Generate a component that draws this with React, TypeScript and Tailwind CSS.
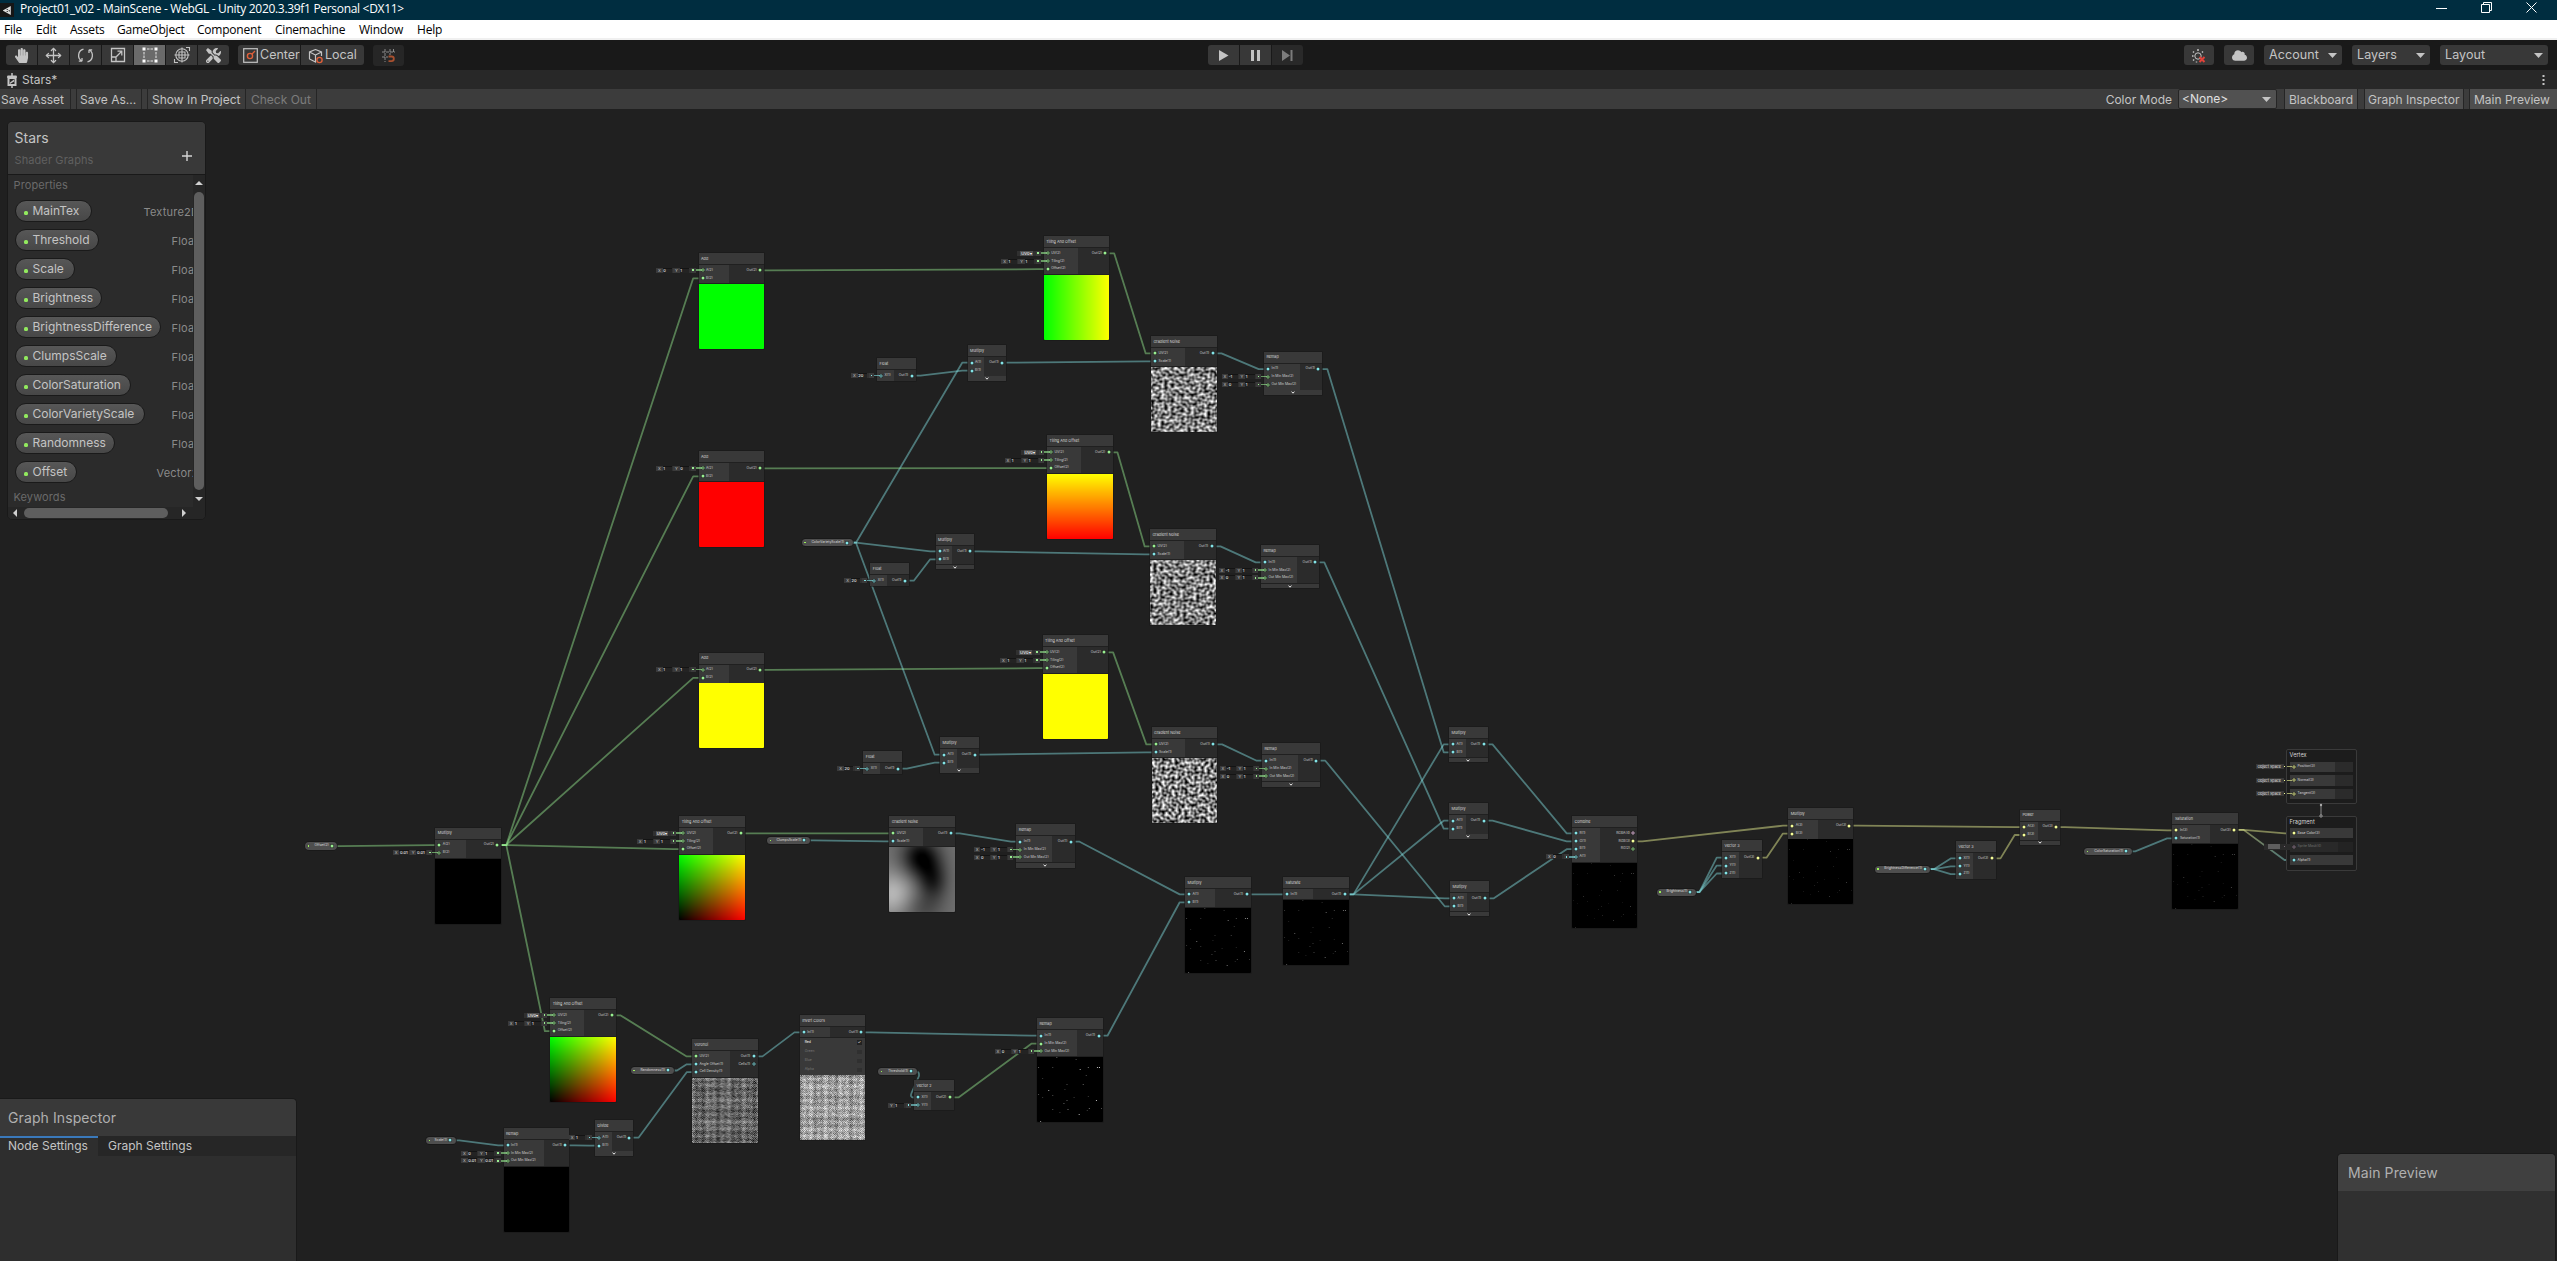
import React from "react";
import { Move } from "lucide-react";
import { FaHandPaper, FaTools, FaCloud } from "react-icons/fa";

const COL: Record<number, string> = { 1: "#84e4e7", 2: "#9aef92", 3: "#f6ff9a", 4: "#fbcbf4" };

type Widget = { row: number; kind: "uv" | "v"; vals?: [string, string][]; c: number };
type Preview = "green" | "red" | "yellow" | "black" | "gy" | "yr" | "uv" | "noise0" | "noise1" | "noise2" | "clumps" | "voronoi" | "invert" | "stars1" | "stars2" | "stars3" | "stars4" | "stars5" | "stars6";
type NodeT = {
  id: string; t: string; x: number; y: number; w: number; lc: number;
  ins: [string, number][]; outs: [string, number, boolean?][];
  wid?: Widget[]; pv?: Preview; foot?: boolean; toggles?: boolean;
};
type PillT = { id: string; t: string; x: number; y: number; w: number; c: number };

const xy = (row: number, a: string, b: string): Widget => ({ row, kind: "v", vals: [["X", a], ["Y", b]], c: 2 });
const uv0: Widget = { row: 0, kind: "uv", c: 2 };

const add = (id: string, x: number, y: number, a: string, b: string, pv: Preview): NodeT => ({
  id, t: "Add", x, y, w: 65.5, lc: 30, ins: [["A(2)", 2], ["B(2)", 2]], outs: [["Out(2)", 2]], wid: [xy(0, a, b)], pv,
});
const tiling = (id: string, x: number, y: number, pv: Preview): NodeT => ({
  id, t: "Tiling And Offset", x, y, w: 65.5, lc: 34, ins: [["UV(2)", 2], ["Tiling(2)", 2], ["Offset(2)", 2]], outs: [["Out(2)", 2]], wid: [uv0, xy(1, "1", "1")], pv,
});
const gradient = (id: string, x: number, y: number, pv: Preview): NodeT => ({
  id, t: "Gradient Noise", x, y, w: 65.5, lc: 33.5, ins: [["UV(2)", 2], ["Scale(1)", 1]], outs: [["Out(1)", 1]], pv,
});
const multiply = (id: string, x: number, y: number): NodeT => ({
  id, t: "Multiply", x, y, w: 38.5, lc: 16.8, ins: [["A(1)", 1], ["B(1)", 1]], outs: [["Out(1)", 1]], foot: true,
});
const float = (id: string, x: number, y: number): NodeT => ({
  id, t: "Float", x, y, w: 38.5, lc: 17, ins: [["X(1)", 1]], outs: [["Out(1)", 1]], wid: [{ row: 0, kind: "v", vals: [["X", "20"]], c: 1 }],
});
const remap = (id: string, x: number, y: number): NodeT => ({
  id, t: "Remap", x, y, w: 58.3, lc: 36, ins: [["In(1)", 1], ["In Min Max(2)", 2], ["Out Min Max(2)", 2]], outs: [["Out(1)", 1]], wid: [xy(1, "-1", "1"), xy(2, "0", "1")], foot: true,
});

const NODES: NodeT[] = [
  add("addG", 698.5, 253, "0", "1", "green"),
  add("addR", 698.5, 451, "1", "0", "red"),
  add("addY", 698.5, 652.5, "1", "1", "yellow"),
  tiling("tilG", 1043.7, 236, "gy"),
  tiling("tilR", 1047, 435, "yr"),
  tiling("tilY", 1042.6, 635, "yellow"),
  tiling("tilB", 679.2, 816, "uv"),
  tiling("tilC", 550.2, 998, "uv"),
  gradient("gr1", 1151, 336, "noise0"),
  gradient("gr2", 1150, 529, "noise1"),
  gradient("gr3", 1151.6, 727, "noise2"),
  gradient("grC", 889.2, 816, "clumps"),
  multiply("m1", 967.5, 345.3),
  multiply("m2", 935.5, 534),
  multiply("m3", 940, 737.3),
  float("f1", 877, 358.3),
  float("f2", 870.3, 563.3),
  float("f3", 863.3, 751.3),
  remap("r1", 1264, 351.7),
  remap("r2", 1261, 545),
  remap("r3", 1262, 743.3),
  remap("rC", 1016.3, 824.3),
  multiply("ma", 1449, 727),
  multiply("mb", 1449, 803.3),
  multiply("mc", 1450, 881),
  { id: "mOff", t: "Multiply", x: 435.3, y: 827.7, w: 66, lc: 30.5, ins: [["A(2)", 2], ["B(2)", 2]], outs: [["Out(2)", 2]], wid: [xy(1, "0.01", "0.01")], pv: "black" },
  { id: "mL", t: "Multiply", x: 1185, y: 877, w: 65.5, lc: 30, ins: [["A(1)", 1], ["B(1)", 1]], outs: [["Out(1)", 1]], pv: "stars2" },
  { id: "sat", t: "Saturate", x: 1283, y: 877, w: 65.5, lc: 30, ins: [["In(1)", 1]], outs: [["Out(1)", 1]], pv: "stars3" },
  { id: "rS", t: "Remap", x: 503.5, y: 1128, w: 65.7, lc: 40, ins: [["In(1)", 1], ["In Min Max(2)", 2], ["Out Min Max(2)", 2]], outs: [["Out(1)", 1]], wid: [xy(1, "0", "1"), xy(2, "0.01", "0.01")], pv: "black" },
  { id: "div", t: "Divide", x: 594.8, y: 1120.3, w: 38.7, lc: 16.8, ins: [["A(1)", 1], ["B(1)", 1]], outs: [["Out(1)", 1]], wid: [{ row: 0, kind: "v", vals: [["X", "1"]], c: 1 }], foot: true },
  { id: "vor", t: "Voronoi", x: 692, y: 1039, w: 65.5, lc: 38, ins: [["UV(2)", 2], ["Angle Offset(1)", 1], ["Cell Density(1)", 1]], outs: [["Out(1)", 1], ["Cells(1)", 1, true]], pv: "voronoi" },
  { id: "inv", t: "Invert Colors", x: 799.7, y: 1015, w: 65.7, lc: 30, ins: [["In(1)", 1]], outs: [["Out(1)", 1]], toggles: true, pv: "invert" },
  { id: "v2", t: "Vector 2", x: 914, y: 1080, w: 39.5, lc: 17, ins: [["X(1)", 1], ["Y(1)", 1]], outs: [["Out(2)", 2]], wid: [{ row: 1, kind: "v", vals: [["Y", "1"]], c: 1 }] },
  { id: "rD", t: "Remap", x: 1037, y: 1018.3, w: 65.5, lc: 40, ins: [["In(1)", 1], ["In Min Max(2)", 2], ["Out Min Max(2)", 2]], outs: [["Out(1)", 1]], wid: [xy(2, "0", "1")], pv: "stars1" },
  { id: "comb", t: "Combine", x: 1572, y: 816, w: 65.3, lc: 28, ins: [["R(1)", 1], ["G(1)", 1], ["B(1)", 1], ["A(1)", 1]], outs: [["RGBA(4)", 4, true], ["RGB(3)", 3], ["RG(2)", 2, true]], wid: [{ row: 3, kind: "v", vals: [["X", "0"]], c: 1 }], pv: "stars4" },
  { id: "mBr", t: "Multiply", x: 1788.2, y: 808.3, w: 65.3, lc: 30, ins: [["A(3)", 3], ["B(3)", 3]], outs: [["Out(3)", 3]], pv: "stars5" },
  { id: "v3a", t: "Vector 3", x: 1722, y: 840.3, w: 39.5, lc: 17.3, ins: [["X(1)", 1], ["Y(1)", 1], ["Z(1)", 1]], outs: [["Out(3)", 3]] },
  { id: "pow", t: "Power", x: 2020, y: 809.7, w: 40, lc: 17.5, ins: [["A(3)", 3], ["B(3)", 3]], outs: [["Out(3)", 3]], foot: true },
  { id: "v3b", t: "Vector 3", x: 1956, y: 841, w: 39.5, lc: 16.5, ins: [["X(1)", 1], ["Y(1)", 1], ["Z(1)", 1]], outs: [["Out(3)", 3]] },
  { id: "satn", t: "Saturation", x: 2172.4, y: 813, w: 65.5, lc: 38, ins: [["In(3)", 3], ["Saturation(1)", 1]], outs: [["Out(3)", 3]], pv: "stars6" },
];

const PILLS: PillT[] = [
  { id: "pVar", t: "ColorVarietyScale(1)", x: 801.5, y: 542.7, w: 51, c: 1 },
  { id: "pCl", t: "ClumpsScale(1)", x: 767.4, y: 840.4, w: 42.5, c: 1 },
  { id: "pOff", t: "Offset(2)", x: 305, y: 846.1, w: 32.3, c: 2 },
  { id: "pSc", t: "Scale(1)", x: 426, y: 1140.4, w: 29.7, c: 1 },
  { id: "pRnd", t: "Randomness(1)", x: 630.5, y: 1070.5, w: 43, c: 1 },
  { id: "pTh", t: "Threshold(1)", x: 878, y: 1071.4, w: 38.5, c: 1 },
  { id: "pBr", t: "Brightness(1)", x: 1656.6, y: 892.2, w: 39.3, c: 1 },
  { id: "pBd", t: "BrightnessDifference(1)", x: 1874.6, y: 869.2, w: 55.8, c: 1 },
  { id: "pCs", t: "ColorSaturation(1)", x: 2084.2, y: 851.4, w: 47.5, c: 1 },
];

const LINKS: [string, number, string, number][] = [
  ["pOff", 0, "mOff", 0], ["mOff", 0, "addG", 1], ["mOff", 0, "addR", 1], ["mOff", 0, "addY", 1], ["mOff", 0, "tilB", 2], ["mOff", 0, "tilC", 2],
  ["addG", 0, "tilG", 2], ["addR", 0, "tilR", 2], ["addY", 0, "tilY", 2],
  ["tilG", 0, "gr1", 0], ["tilR", 0, "gr2", 0], ["tilY", 0, "gr3", 0], ["tilB", 0, "grC", 0], ["pCl", 0, "grC", 1],
  ["pVar", 0, "m1", 0], ["pVar", 0, "m2", 0], ["pVar", 0, "m3", 0],
  ["f1", 0, "m1", 1], ["f2", 0, "m2", 1], ["f3", 0, "m3", 1],
  ["m1", 0, "gr1", 1], ["m2", 0, "gr2", 1], ["m3", 0, "gr3", 1],
  ["gr1", 0, "r1", 0], ["gr2", 0, "r2", 0], ["gr3", 0, "r3", 0], ["grC", 0, "rC", 0],
  ["r1", 0, "ma", 1], ["r2", 0, "mb", 1], ["r3", 0, "mc", 1], ["rC", 0, "mL", 0],
  ["tilC", 0, "vor", 0], ["pRnd", 0, "vor", 1], ["pSc", 0, "rS", 0], ["rS", 0, "div", 1], ["div", 0, "vor", 2], ["vor", 0, "inv", 0], ["inv", 0, "rD", 0],
  ["v2", 0, "rD", 1], ["rD", 0, "mL", 1], ["mL", 0, "sat", 0],
  ["sat", 0, "ma", 0], ["sat", 0, "mb", 0], ["sat", 0, "mc", 0],
  ["ma", 0, "comb", 0], ["mb", 0, "comb", 1], ["mc", 0, "comb", 2], ["comb", 1, "mBr", 0],
  ["pBr", 0, "v3a", 0], ["pBr", 0, "v3a", 1], ["pBr", 0, "v3a", 2], ["v3a", 0, "mBr", 1], ["mBr", 0, "pow", 0],
  ["pBd", 0, "v3b", 0], ["pBd", 0, "v3b", 1], ["pBd", 0, "v3b", 2], ["v3b", 0, "pow", 1], ["pow", 0, "satn", 0], ["pCs", 0, "satn", 1],
];

const portY = (i: number) => 17.4 + 7.9 * i;

function Wires() {
  const lines = LINKS.map(([a, i, b, j], k) => {
    const p = PILLS.find((n) => n.id === a);
    const s = NODES.find((n) => n.id === a);
    const d = NODES.find((n) => n.id === b)!;
    const x1 = p ? p.x + p.w - 5.5 : s!.x + s!.w - 4;
    const y1 = p ? p.y : s!.y + portY(i);
    const c = p ? p.c : s!.outs[i][1];
    const x2 = d.x + 4;
    const y2 = d.y + portY(j);
    return <path key={k} d={`M${x1} ${y1}H${x1 + 9}L${x2 - 9.3} ${y2}H${x2}`} stroke={COL[c]} strokeOpacity=".45" strokeWidth="1.8" />;
  });
  return (
    <svg className="absolute left-0 top-0" width="2557" height="1261" fill="none" strokeLinejoin="round">
      <defs>
        <linearGradient id="yt" x1="2243" y1="830" x2="2290" y2="860" gradientUnits="userSpaceOnUse">
          <stop offset="0" stopColor={COL[3]} />
          <stop offset="1" stopColor={COL[1]} />
        </linearGradient>
      </defs>
      {lines}
      <path d="M916 1071.4Q919.5 1071.4 919 1076L911.5 1093Q909.5 1097.5 914 1097.5" stroke={COL[1]} strokeOpacity=".45" strokeWidth="1.8" />
      <path d="M2234.6 829.9H2243.6L2285 833.4H2293" stroke={COL[3]} strokeOpacity=".45" strokeWidth="1.8" />
      <path d="M2234.6 829.9H2243.6L2284.5 860H2293" stroke="url(#yt)" strokeOpacity=".45" strokeWidth="1.8" />
    </svg>
  );
}

/* ---- preview textures ---- */
const S = 65;
const mod = (a: number, n: number) => ((a % n) + n) % n;
const fr = (a: number) => a - Math.floor(a);
function dir(px: number, py: number): [number, number] {
  px = mod(px, 289); py = mod(py, 289);
  let x = mod((34 * px + 1) * px, 289) + py;
  x = mod((34 * x + 1) * x, 289);
  x = fr(x / 41) * 2 - 1;
  const vx = x - Math.floor(x + 0.5), vy = Math.abs(x) - 0.5;
  const l = Math.hypot(vx, vy) || 1;
  return [vx / l, vy / l];
}
function gnoise(u: number, v: number, s: number) {
  const px = u * s, py = v * s, ix = Math.floor(px), iy = Math.floor(py), fx = px - ix, fy = py - iy;
  const dt = (ox: number, oy: number) => { const g = dir(ix + ox, iy + oy); return g[0] * (fx - ox) + g[1] * (fy - oy); };
  const q = (t: number) => t * t * t * (t * (t * 6 - 15) + 10);
  const a = dt(0, 0), b = dt(0, 1), c = dt(1, 0), d = dt(1, 1), wy = q(fy), wx = q(fx);
  const l = a + (b - a) * wy, r = c + (d - c) * wy;
  return l + (r - l) * wx + 0.5;
}
/* dense cells aliased into a woven pattern with nine bands per side */
function weave(x: number, y: number) {
  const h = fr(Math.sin(x * 12.9898 + y * 78.233) * 43758.5453);
  const bx = Math.cos((x * 2 * Math.PI) / 7.2) * 0.07 + Math.cos((x * 2 * Math.PI) / 17) * 0.04;
  const by = Math.cos((y * 2 * Math.PI) / 7.2) * 0.07 + Math.cos((y * 2 * Math.PI) / 23) * 0.03;
  return 0.4 + bx + by + ((x + y) % 2 ? 0.07 : -0.07) + (h - 0.5) * 0.26;
}
const blob = (x: number, y: number, cx: number, cy: number, rx: number, ry: number) => Math.exp(-(((x - cx) / rx) ** 2 + ((y - cy) / ry) ** 2));
const clump = (x: number, y: number) =>
  0.44 - 0.42 * blob(x, y, 0.48, 0.16, 0.28, 0.3) - 0.3 * blob(x, y, 0.66, 0.52, 0.22, 0.3) - 0.14 * blob(x, y, 0.5, 0.95, 0.3, 0.25) + 0.28 * blob(x, y, 0.06, 0.72, 0.32, 0.34);

const STARS = [[19, 0, 0.5], [38, 2, 0.4], [1, 10, 0.5], [15, 10, 0.4], [42, 12, 0.9], [50, 10, 0.6], [59, 10, 1], [61, 10, 1], [48, 18, 0.4], [5, 21, 0.3], [29, 27, 0.4], [45, 27, 0.5], [11, 33, 0.8], [1, 37, 0.4], [15, 38, 0.4], [50, 39, 0.3], [58, 43, 1], [29, 43, 0.5], [26, 46, 0.5], [30, 52, 0.6], [51, 51, 0.6], [15, 52, 0.4], [41, 57, 0.9], [63, 51, 0.4], [3, 64, 0.7], [5, 40, 0.3], [49, 53, 0.3], [27, 32, 0.3], [36, 40, 0.3], [22, 55, 0.3]];
const DIM: Record<string, number> = { stars1: 0.75, stars2: 0.5, stars3: 0.42, stars4: 0.22, stars5: 0.22, stars6: 0.25 };

function pixel(kind: Preview, x: number, y: number): [number, number, number] {
  const u = (x + 0.5) / S, v = 1 - (y + 0.5) / S;
  let g = 0;
  switch (kind) {
    case "gy": return [u * 255, 255, 0];
    case "yr": return [255, v * 255, 0];
    case "uv": return [u * 255, v * 255, 0];
    case "noise0": g = gnoise(u, v + 1, 20); break;
    case "noise1": g = gnoise(u + 1, v, 20); break;
    case "noise2": g = gnoise(u + 1, v + 1, 20); break;
    case "clumps": g = clump(u, 1 - v); break;
    case "voronoi": g = weave(x, y); break;
    case "invert": g = 1.02 - weave(x, y); break;
  }
  g = Math.max(0, Math.min(1, g)) * 255;
  return [g, g, g];
}

function Texture({ kind }: { kind: Preview }) {
  const paint = (c: HTMLCanvasElement | null) => {
    const g = c?.getContext("2d");
    if (!g) return;
    if (kind.startsWith("stars")) {
      g.fillStyle = "#000";
      g.fillRect(0, 0, S, S);
      STARS.forEach(([x, y, b]) => {
        const k = Math.round(b * DIM[kind] * 255);
        g.fillStyle = `rgb(${k},${k},${k})`;
        g.fillRect(x, y, 1, 1);
      });
      return;
    }
    const im = g.createImageData(S, S);
    for (let y = 0; y < S; y++) for (let x = 0; x < S; x++) {
      const [r, gg, b] = pixel(kind, x, y);
      const o = (y * S + x) * 4;
      im.data[o] = r; im.data[o + 1] = gg; im.data[o + 2] = b; im.data[o + 3] = 255;
    }
    g.putImageData(im, 0, 0);
  };
  return <canvas ref={paint} width={S} height={S} className="block h-[65px] w-full" />;
}

function PreviewBox({ kind }: { kind: Preview }) {
  if (kind === "green") return <div className="h-[65px] rounded-b-[1px] bg-[#00ff00]" />;
  if (kind === "red") return <div className="h-[65px] rounded-b-[1px] bg-[#ff0000]" />;
  if (kind === "yellow") return <div className="h-[65px] rounded-b-[1px] bg-[#ffff00]" />;
  if (kind === "black") return <div className="h-[65px] rounded-b-[1px] bg-black" />;
  return <div className="overflow-hidden rounded-b-[1px]"><Texture kind={kind} /></div>;
}

function Dot({ c, open }: { c: number; open?: boolean }) {
  return (
    <svg className="shrink-0" width="4" height="4" viewBox="0 0 4 4">
      <circle cx="2" cy="2" r="2" fill="#1c1c1c" />
      {open ? <circle cx="2" cy="2" r="1.2" fill="none" stroke={COL[c]} strokeWidth=".8" /> : <circle cx="2" cy="2" r="1.5" fill={COL[c]} />}
    </svg>
  );
}

function WidgetBox({ w }: { w: Widget }) {
  const width = w.kind === "uv" ? 26.5 : w.vals!.length === 2 ? 42.5 : 26;
  return (
    <div className="absolute flex h-[5px] items-center" style={{ left: -width, top: portY(w.row) - 2.8, width: width + 3 }}>
      <div className="flex h-[5px] flex-1 items-center gap-[1px] bg-[#303030]">
        {w.kind === "uv" ? (
          <span className="ml-[3px] h-[5px] bg-[#505050] px-[1px] text-[4.1px] leading-[5px] whitespace-nowrap text-white">UV0▾</span>
        ) : (
          w.vals!.map(([k, v]) => (
            <span key={k} className="flex h-[5px] items-center text-[4.1px] leading-[5px] text-[#c8c8c8]">
              <span className="h-[5px] w-[6.5px] bg-[#3a3a3a] pl-[2px]">{k}</span>
              <span className="h-[5px] w-[9.5px] bg-[#232323] pl-[.8px] tracking-[-0.1px] whitespace-nowrap text-white shadow-[inset_0_.7px_0_#101010]">{v}</span>
            </span>
          ))
        )}
      </div>
      <div className="flex h-[5px] w-[5px] items-center justify-center bg-[#3a3a3a]">
        <div className="h-[1.5px] w-[1.5px]" style={{ background: COL[w.c] }} />
      </div>
      <div className="h-[1.6px] w-[6px] opacity-60" style={{ background: COL[w.c] }} />
    </div>
  );
}

function GraphNode({ n }: { n: NodeT }) {
  const rows = Math.max(n.ins.length, n.outs.length);
  return (
    <div className="absolute shadow-[0_0_0_.6px_#191919]" style={{ left: n.x, top: n.y, width: n.w }}>
      <div className="flex h-[11px] items-center bg-[#393939] pl-[2.5px] text-[3.75px] leading-none text-[#dadada]">{n.t}</div>
      <div className="mt-[1.2px] flex" style={{ height: 2.3 + 7.9 * rows }}>
        <div className="bg-[#393939] pt-[1.2px] pl-[2px]" style={{ width: n.lc }}>
          {n.ins.map(([l, c], i) => (
            <div key={i} className="flex h-[7.9px] items-center gap-[1.5px] text-[3.4px] leading-none whitespace-nowrap text-[#d0d0d0]">
              <Dot c={c} open={!!n.wid?.some((w) => w.row === i)} />
              {l}
            </div>
          ))}
        </div>
        <div className="flex-1 bg-[#2b2b2b] pt-[1.2px] pr-[2px]">
          {n.outs.map(([l, c, open], i) => (
            <div key={i} className="flex h-[7.9px] items-center justify-end gap-[1.2px] text-[3.4px] leading-none whitespace-nowrap text-[#d0d0d0]">
              {l}
              <Dot c={c} open={open} />
            </div>
          ))}
        </div>
      </div>
      {n.toggles && (
        <div className="mt-[.8px] flex h-[36.5px] flex-col justify-around bg-[#393939] pr-[3.5px] pl-[5px] text-[3.4px] leading-none">
          {["Red", "Green", "Blue", "Alpha"].map((l, i) => (
            <div key={l} className={i ? "flex items-center justify-between text-[#787878]" : "flex items-center justify-between text-white"}>
              {l}
              <span className={i ? "h-[4.5px] w-[4.5px] bg-[#303030] text-[4px]" : "h-[4.5px] w-[4.5px] bg-[#222] text-[4px] text-white"}>{i ? "" : "✓"}</span>
            </div>
          ))}
        </div>
      )}
      {n.pv && <div className="mt-[.7px]"><PreviewBox kind={n.pv} /></div>}
      {n.foot && (
        <div className="mt-[.6px] flex h-[4.5px] items-center justify-center bg-[#393939]">
          <svg width="4" height="3" viewBox="0 0 4 3"><path d="M.6.6L2 2.2L3.4.6" fill="none" stroke="#fff" strokeWidth=".9" /></svg>
        </div>
      )}
      {n.wid?.map((w, i) => <WidgetBox key={i} w={w} />)}
    </div>
  );
}

function GraphPill({ p }: { p: PillT }) {
  return (
    <div className="absolute flex h-[7.4px] items-center justify-between rounded-full bg-[#4e4e4e] pr-[3.5px] pl-[2.5px] text-[3.4px] leading-none whitespace-nowrap text-[#dedede] shadow-[0_0_0_.7px_#171717]" style={{ left: p.x, top: p.y - 3.7, width: p.w }}>
      <span className="h-[1.5px] w-[1.5px] bg-[#9aef5a]" />
      <span className="flex items-center gap-[1px]">{p.t}<Dot c={p.c} /></span>
    </div>
  );
}

function BlockRow({ t, c, wide, dim }: { t: string; c: number; wide?: boolean; dim?: boolean }) {
  return (
    <div className={dim ? "flex h-[10.3px] bg-[#232323] text-[#707070]" : "flex h-[10.3px] bg-[#2b2b2b] text-[#dadada]"}>
      <div className={wide ? "flex w-full items-center gap-[2px] bg-[#393939] pl-[2px] text-[3.4px]" : dim ? "flex w-[48px] items-center gap-[2px] bg-[#292929] pl-[2px] text-[3.4px]" : "flex w-[45.5px] items-center gap-[2px] bg-[#393939] pl-[2px] text-[3.4px]"}>
        <span className={dim ? "flex opacity-50" : "flex"}><Dot c={c} open={!wide} /></span>
        {t}
      </div>
    </div>
  );
}

function Stacks() {
  return (
    <>
      <div className="absolute top-[749.3px] left-[2285.6px] h-[55px] w-[71.5px] rounded-[2px] border border-[#3a3a3a] bg-[#1c1c1c] px-[3px]">
        <div className="flex h-[11.5px] items-center text-[5.6px] leading-none text-[#d4d4d4]">Vertex</div>
        <div className="flex flex-col gap-[3.2px]">
          <BlockRow t="Position(3)" c={3} />
          <BlockRow t="Normal(3)" c={3} />
          <BlockRow t="Tangent(3)" c={3} />
        </div>
      </div>
      <div className="absolute top-[815.7px] left-[2285.6px] h-[55px] w-[71.5px] rounded-[2px] border border-[#3a3a3a] bg-[#1c1c1c] px-[3px]">
        <div className="flex h-[11.5px] items-center text-[5.6px] leading-none text-[#d4d4d4]">Fragment</div>
        <div className="flex flex-col gap-[3.2px]">
          <BlockRow t="Base Color(3)" c={3} wide />
          <BlockRow t="Sprite Mask(4)" c={4} dim />
          <BlockRow t="Alpha(1)" c={1} wide />
        </div>
      </div>
      {[766.3, 780.3, 793.3].map((y) => (
        <div key={y} className="absolute left-[2255.5px] flex h-[5px] w-[37px] items-center" style={{ top: y - 2.5 }}>
          <span className="h-[5px] w-[28px] bg-[#383838] pl-[2px] text-[3.7px] leading-[5px] whitespace-nowrap text-[#e8e8e8]">Object Space</span>
          <span className="h-[1.5px] w-[1.5px] bg-[#f6ff9a]" />
          <span className="ml-[2px] h-[1.5px] w-[5px] bg-[#f6ff9a]/60" />
        </div>
      ))}
      <div className="absolute top-[844px] left-[2264px] flex h-[5.5px] w-[27px] items-center gap-[4px] bg-[#2a2a2a] pl-[4px]">
        <span className="h-[5px] w-[12px] bg-[#5e5e5e]" />
        <span className="h-[1px] w-[1px] bg-[#7a6a78]" />
      </div>
      <svg className="absolute top-[803px] left-[2318px]" width="6" height="15" viewBox="0 0 6 15"><path d="M3 1V14" stroke="#8a8a8a" strokeWidth="1" /><circle cx="3" cy="2" r="1.2" fill="#aaa" /><circle cx="3" cy="13" r="1.2" fill="#222" stroke="#ccc" strokeWidth=".7" /></svg>
    </>
  );
}

/* ---- window chrome ---- */
const ic = "#c4c4c4";
const RotateIcon = () => <svg width="17" height="17" viewBox="0 0 17 17" fill="none" stroke={ic} strokeWidth="1.3"><path d="M6.5 2.2A6.5 6.5 0 0 0 5 14.2M5 14.2H1.8M5 14.2V11M10.5 14.8A6.5 6.5 0 0 0 12 2.8M12 2.8H15.2M12 2.8V6" /></svg>;
const ScaleIcon = () => <svg width="16" height="16" viewBox="0 0 16 16" fill="none" stroke={ic} strokeWidth="1.3"><path d="M1.5 1.5H14.5V14.5H1.5ZM1.5 10H6V14.5M6.5 9.5L11.5 4.5M7.5 4.2H11.8V8.5" /></svg>;
const RectIcon = () => <svg width="16" height="16" viewBox="0 0 16 16"><path d="M5 2H11M5 14H11M2 5V11M14 5V11" stroke="#e8e8e8" strokeDasharray="2.5 1" fill="none" /><path d="M.5.5h3v3h-3zM12.5.5h3v3h-3zM.5 12.5h3v3h-3zM12.5 12.5h3v3h-3z" fill="#fff" /></svg>;
const TransformIcon = () => <svg width="18" height="18" viewBox="0 0 18 18" fill="none" stroke={ic} strokeWidth="1.1"><circle cx="9" cy="9" r="6.2" /><path d="M9 1.5V16.5M1.5 9H16.5M6 6H12V12H6ZM13 1.5H16.5V5M1.5 13V16.5H5" /></svg>;
const CenterIcon = () => <svg width="15" height="15" viewBox="0 0 15 15" fill="none"><rect x=".7" y=".7" width="13.6" height="13.6" stroke={ic} strokeWidth="1.2" /><circle cx="7" cy="8" r="2.6" stroke="#e0603a" strokeWidth="1.4" /><path d="M9 6L12 3" stroke="#e0603a" strokeWidth="1.2" /></svg>;
const CubeIcon = () => <svg width="16" height="16" viewBox="0 0 16 16" fill="none"><path d="M7.5 1.5L13.5 4V8M7.5 1.5L1.5 4V11L7.5 14V7L1.5 4M7.5 7L13.5 4" stroke={ic} strokeWidth="1.2" /><circle cx="11.5" cy="12" r="2.6" stroke="#e0603a" strokeWidth="1.4" /></svg>;
const SnapIcon = () => <svg width="15" height="15" viewBox="0 0 15 15" fill="none"><path d="M4 1V14M9 1V7M1 4H14M1 9H7M12.5 1V5" stroke="#8a8a8a" strokeWidth="1" strokeDasharray="3 1" /><path d="M7.5 8.5H10.5A2.3 2.3 0 0 1 10.5 13.2H7.5" stroke="#a8502f" strokeWidth="1.8" /></svg>;
const BugIcon = () => <svg width="16" height="16" viewBox="0 0 16 16" fill="none"><circle cx="7" cy="8" r="3.2" stroke={ic} strokeWidth="1" /><path d="M7 1V3M2 3.5L3 4.5M12 3.5L11 4.5M1 8H2.5M2 12.5L3.2 11.5M5.5 13.5V14.5" stroke={ic} strokeWidth="1.5" /><path d="M8.5 9L13.5 14M13.5 9L8.5 14" stroke="#e0433a" strokeWidth="2" /></svg>;
const Caret = () => <svg className="shrink-0" width="9" height="5" viewBox="0 0 9 5"><path d="M0 0H9L4.500 5Z" fill={ic} /></svg>;

function ToolBtn({ children, on }: { children: React.ReactNode; on?: boolean }) {
  return <div className={on ? "flex h-5 w-[31px] items-center justify-center bg-[#6a6a6a]" : "flex h-5 w-[31px] items-center justify-center bg-[#383838]"}>{children}</div>;
}

const MENU: [string, string][] = [["File", "w-8"], ["Edit", "w-[34px]"], ["Assets", "w-[47px]"], ["GameObject", "w-20"], ["Component", "w-[78px]"], ["Cinemachine", "w-[84px]"], ["Window", "w-[58px]"], ["Help", "w-10"]];

function Chrome() {
  return (
    <>
      <div className="flex h-5 items-center bg-[#002d40] font-['Open_Sans',sans-serif] text-white">
        <div className="flex h-[14px] w-[14px] items-center justify-center bg-[#161616]">
          <svg width="9" height="9" viewBox="0 0 10 10" fill="none" stroke="#ddd" strokeWidth="1.3"><path d="M1 5L8 1.2V8.8ZM1 5H5.500L8 1.200M5.500 5L8 8.800" /></svg>
        </div>
        <span className="-mt-[2px] ml-[6px] text-[12px] leading-none tracking-[-0.31px]">Project01_v02 - MainScene - WebGL - Unity 2020.3.39f1 Personal &lt;DX11&gt;</span>
        <div className="mr-[20px] ml-auto flex items-center gap-[34px] pb-[5px]">
          <svg width="11" height="11" viewBox="0 0 11 11"><path d="M0 6.500H11" stroke="#fff" /></svg>
          <svg width="11" height="11" viewBox="0 0 11 11" fill="none" stroke="#fff"><path d="M.5 2.500H8.500V10.500H.5ZM2.500 2.500V.5H10.500V8.500H8.500" /></svg>
          <svg width="11" height="11" viewBox="0 0 11 11" stroke="#fff"><path d="M.5.5L10.500 10.500M10.500.5L.5 10.500" /></svg>
        </div>
      </div>
      <div className="flex h-5 items-center border-b-2 border-[#f0f0f0] bg-white pt-px pl-1 font-['Open_Sans',sans-serif] text-[12px] leading-none tracking-[-0.22px] text-black">
        {MENU.map(([m, w]) => <span key={m} className={w}>{m}</span>)}
      </div>
      <div className="relative flex h-[30px] items-center bg-[#191919] pr-[9px] pl-[6px]">
        <div className="flex gap-px overflow-hidden rounded-[3px]">
          <ToolBtn><FaHandPaper size={15} color={ic} /></ToolBtn>
          <ToolBtn><Move size={17} color={ic} strokeWidth={1.8} /></ToolBtn>
          <ToolBtn><RotateIcon /></ToolBtn>
          <ToolBtn><ScaleIcon /></ToolBtn>
          <ToolBtn on><RectIcon /></ToolBtn>
          <ToolBtn><TransformIcon /></ToolBtn>
          <ToolBtn><FaTools size={15} color={ic} /></ToolBtn>
        </div>
        <div className="ml-[9px] flex gap-px overflow-hidden rounded-[3px] text-[12.5px] text-[#c4c4c4]">
          <div className="flex h-5 w-[62px] items-center gap-[2px] bg-[#383838] pt-px pl-[5px]"><CenterIcon />Center</div>
          <div className="flex h-5 w-[63px] items-center gap-px bg-[#383838] pt-px pl-[7px]"><CubeIcon />Local</div>
        </div>
        <div className="ml-[9px] flex h-[21px] w-[31px] items-center justify-center rounded-[3px] bg-[#262626]"><SnapIcon /></div>
        <div className="absolute left-[1208px] flex gap-px overflow-hidden rounded-[3px]">
          <ToolBtn><svg width="10" height="11" viewBox="0 0 10 11"><path d="M0 0L9.500 5.500L0 11Z" fill={ic} /></svg></ToolBtn>
          <ToolBtn><svg width="9" height="11" viewBox="0 0 9 11"><path d="M0 0H3V11H0ZM6 0H9V11H6Z" fill={ic} /></svg></ToolBtn>
          <div className="flex h-5 w-[31px] items-center justify-center bg-[#292929]"><svg width="11" height="11" viewBox="0 0 11 11"><path d="M0 0L8 5.500L0 11ZM8.500 0H10.500V11H8.500Z" fill="#7c7c7c" /></svg></div>
        </div>
        <div className="ml-auto flex gap-[10px] text-[12.5px] text-[#c4c4c4] [&>div]:flex [&>div]:h-5 [&>div]:items-center [&>div]:rounded-[3px] [&>div]:bg-[#383838] [&>div]:pt-px">
          <div className="w-[30px] justify-center"><BugIcon /></div>
          <div className="w-[30px] justify-center"><FaCloud size={15} color={ic} /></div>
          <div className="w-[78px] justify-between px-[5px] tracking-[0.1px]">Account<Caret /></div>
          <div className="w-[78px] justify-between px-[5px] tracking-[0.1px]">Layers<Caret /></div>
          <div className="w-[108px] justify-between px-[5px] tracking-[0.1px]">Layout<Caret /></div>
        </div>
      </div>
      <div className="flex h-[19px] items-center bg-[#282828] pt-px pr-[12px] pl-[6px] text-[12px] text-[#c4c4c4]">
        <svg width="12" height="15" viewBox="0 0 12 15"><path d="M1.500 2.500H10.500V13H1.500Z" fill={ic} /><path d="M6 0V3M6 13V15M1 4H11" stroke={ic} strokeWidth="1.500" /><path d="M3.500 6H8.500V11H3.500Z" fill="#282828" /><path d="M4 9.500L8 6.500V8.500L4 11Z" fill={ic} /></svg>
        <span className="ml-[4px]">Stars*</span>
        <svg className="ml-auto" width="3" height="11" viewBox="0 0 3 11"><path d="M.5 0h2v2h-2zM.5 4h2v2h-2zM.5 8h2v2h-2z" fill={ic} /></svg>
      </div>
      <div className="flex h-5 items-center bg-[#3c3c3c] text-[12px] whitespace-nowrap text-[#c4c4c4] [&>div]:h-full [&>div]:border-[#252525] [&>div]:leading-[22px]">
        <div className="w-[71px] border-r pl-px">Save Asset</div>
        <div className="w-[6px] border-r" />
        <div className="w-[65px] border-r pl-[3px]">Save As...</div>
        <div className="w-[6px] border-r" />
        <div className="w-[98px] border-r pl-[4px]">Show In Project</div>
        <div className="w-[71px] border-r pl-[5px] text-[#7c7c7c]">Check Out</div>
        <div className="mr-[6px] ml-auto">Color Mode</div>
        <div className="mr-[7px] flex w-[99px] items-center justify-between rounded-[2px] border border-[#303030] bg-[#515151] pr-[5px] pl-[3px] text-[#e0e0e0]">&lt;None&gt;<Caret /></div>
        <div className="w-[74px] border-x bg-[#4e4e4e] pl-[4px]">Blackboard</div>
        <div className="ml-[6px] w-[100px] border-x bg-[#4e4e4e] pl-[3px]">Graph Inspector</div>
        <div className="ml-[5px] w-[88px] border-l bg-[#4e4e4e] pl-[4px]">Main Preview</div>
      </div>
    </>
  );
}

const PROPS: [string, string][] = [["MainTex", "Texture2D"], ["Threshold", "Float"], ["Scale", "Float"], ["Brightness", "Float"], ["BrightnessDifference", "Float"], ["ClumpsScale", "Float"], ["ColorSaturation", "Float"], ["ColorVarietyScale", "Float"], ["Randomness", "Float"], ["Offset", "Vector2"]];
const PILL_W: Record<string, string> = { MainTex: "w-[77px]", Threshold: "w-[84px]", Scale: "w-[60px]", Brightness: "w-[87px]", BrightnessDifference: "w-[146px]", ClumpsScale: "w-[102px]", ColorSaturation: "w-[116px]", ColorVarietyScale: "w-[130px]", Randomness: "w-[100px]", Offset: "w-[62px]" };
const TYPE_POS: Record<string, string> = { Texture2D: "ml-auto w-[49px]", Float: "ml-auto w-[21px]", Vector2: "ml-auto w-[36px]" };

function Blackboard() {
  return (
    <div className="absolute top-[11.5px] left-[6.5px] flex h-[399px] w-[199px] flex-col overflow-hidden rounded-[5px] border border-[#191919] bg-[#2b2b2b]">
      <div className="flex h-[53px] justify-between border-b border-[#191919] bg-[#393939] pt-[7px] pr-[13px] pl-[7px]">
        <div>
          <div className="text-[14px] leading-[17px] text-[#c4c4c4]">Stars</div>
          <div className="mt-[7px] text-[11px] leading-[14px] tracking-[0.1px] text-[#606060]">Shader Graphs</div>
        </div>
        <svg className="mt-[22px]" width="10" height="10" viewBox="0 0 10 10"><path d="M5 0V10M0 5H10" stroke="#d4d4d4" strokeWidth="1.4" /></svg>
      </div>
      <div className="flex min-h-0 flex-1">
        <div className="w-[185px] overflow-hidden">
          <div className="pt-[3px] pl-[6px] text-[11px] leading-[14px] tracking-[0.1px] text-[#6a6a6a]">Properties</div>
          <div className="mt-[8.5px] flex flex-col gap-[7px]">
            {PROPS.map(([n, t]) => (
              <div key={n} className="flex h-[22px] items-center pl-[7px] whitespace-nowrap">
                <div className={"flex h-[22px] items-center rounded-full border border-[#1a1a1a] bg-[linear-gradient(#575757,#474747)] pl-[8px] text-[12px] text-[#c4c4c4] " + PILL_W[n]}>
                  <span className="mt-[3px] mr-[5px] h-[4px] w-[4px] rounded-[1.5px] bg-[#92ea5e]" />
                  {n}
                </div>
                <div className={TYPE_POS[t]}><span className="relative -top-px text-[11px] tracking-[0.2px] text-[#8a8a8a]">{t}</span></div>
              </div>
            ))}
          </div>
          <div className="mt-[6px] pl-[6px] text-[11px] leading-[16px] tracking-[0.1px] text-[#6a6a6a]">Keywords</div>
        </div>
        <div className="flex flex-1 flex-col items-center bg-[#262626] pt-[6px] pb-[6px]">
          <svg width="8" height="4" viewBox="0 0 8 4"><path d="M0 4L4 0L8 4Z" fill="#d0d0d0" /></svg>
          <div className="my-[7px] w-[10px] flex-1 rounded-full bg-[#5e5e5e]" />
          <svg width="8" height="4" viewBox="0 0 8 4"><path d="M0 0H8L4 4Z" fill="#d0d0d0" /></svg>
        </div>
      </div>
      <div className="flex h-[12px] items-center bg-[#262626] pl-[5px]">
        <svg width="4" height="8" viewBox="0 0 4 8"><path d="M4 0V8L0 4Z" fill="#d0d0d0" /></svg>
        <div className="mr-[14px] ml-[7px] h-[10px] w-[144px] rounded-full bg-[#5e5e5e]" />
        <svg width="4" height="8" viewBox="0 0 4 8"><path d="M0 0V8L4 4Z" fill="#d0d0d0" /></svg>
      </div>
    </div>
  );
}

export default function App() {
  return (
    <div className="flex h-[1261px] w-[2557px] flex-col overflow-hidden bg-[#202020] font-[Inter,sans-serif]">
      <Chrome />
      <div className="relative flex-1 overflow-hidden bg-[#202020]">
        <div className="absolute -top-[109px] left-0 h-[1261px] w-[2557px]">
          <Wires />
          {NODES.map((n) => <GraphNode key={n.id} n={n} />)}
          {PILLS.map((p) => <GraphPill key={p.id} p={p} />)}
          <Stacks />
        </div>
        <Blackboard />
        <div className="absolute bottom-0 left-[-5px] h-[163px] w-[302px] overflow-hidden rounded-t-[5px] border border-b-0 border-[#191919] bg-[#2e2e2e]">
          <div className="flex h-[37px] items-center bg-[#393939] pb-px pl-[12px] text-[14px] tracking-[0.1px] text-[#b0b0b0]">Graph Inspector</div>
          <div className="flex h-5 bg-[#262626] text-[12px] leading-[16px] text-[#c4c4c4]">
            <div className="w-[102px] border-t-2 border-[#3a79bb] bg-[#2e2e2e] pl-[12px]">Node Settings</div>
            <div className="pt-[2px] pl-[10px]">Graph Settings</div>
          </div>
        </div>
        <div className="absolute right-px bottom-0 h-[108px] w-[219px] overflow-hidden rounded-t-[5px] border border-b-0 border-[#191919] bg-[#303030]">
          <div className="flex h-[37px] items-center bg-[#404040] pb-px pl-[10px] text-[14px] tracking-[0.1px] text-[#b0b0b0]">Main Preview</div>
        </div>
      </div>
    </div>
  );
}
